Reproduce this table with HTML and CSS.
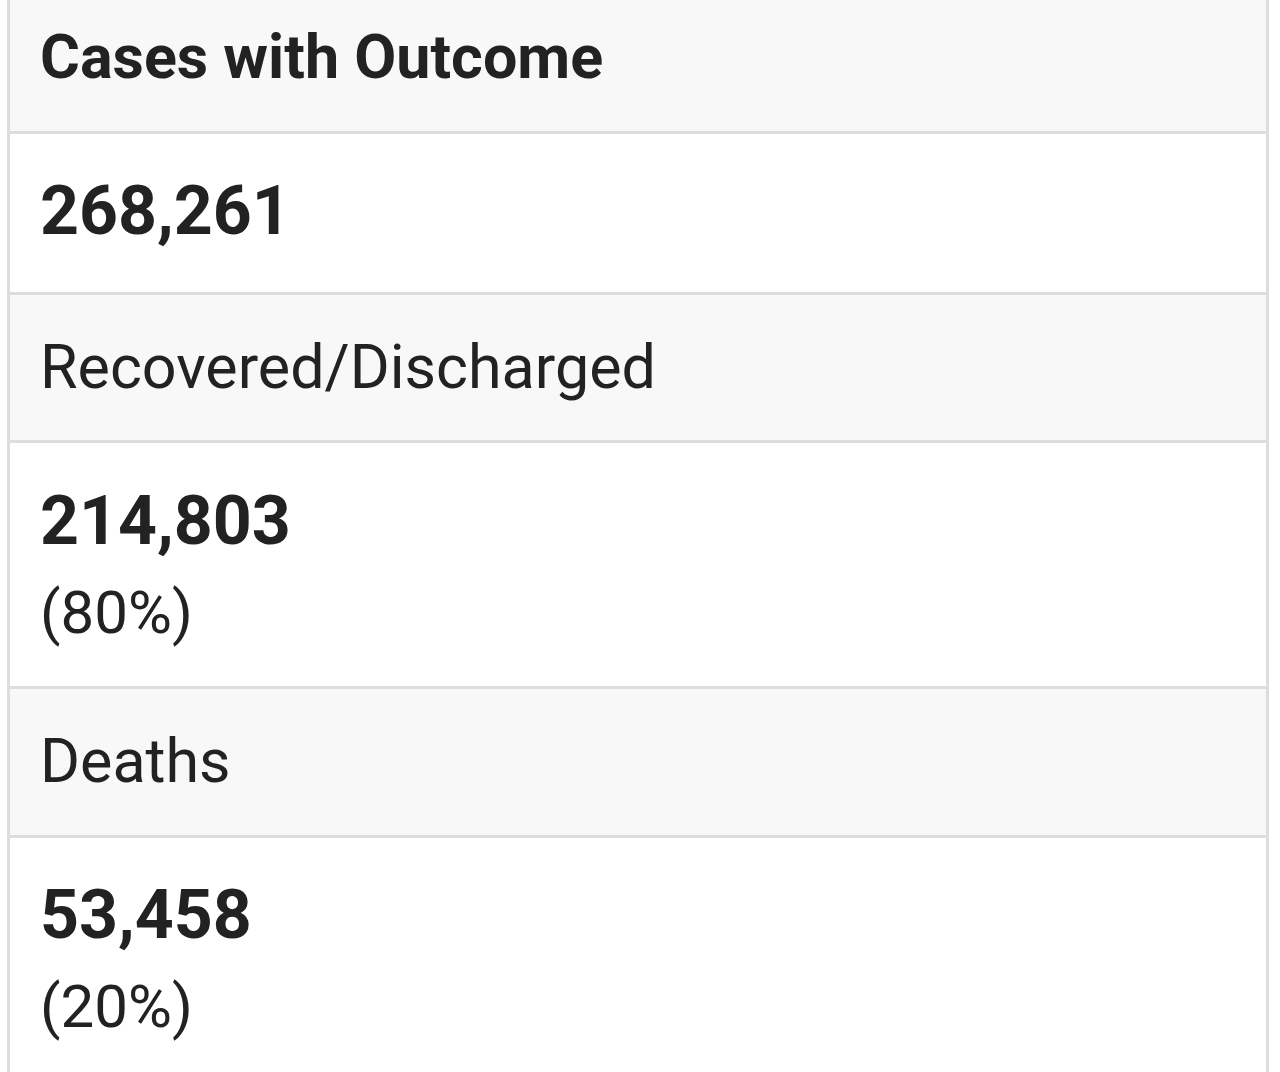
FILE: index.html
```html
<!DOCTYPE html>
<html lang="en">
<head>
<meta charset="utf-8">
<title>Cases with Outcome</title>
<link rel="stylesheet" href="styles.css">
</head>
<body>
<div class="box">
  <div class="cell head title">Cases with Outcome</div>
  <div class="cell single">
    <div class="num">268,261</div>
  </div>
  <div class="cell head label">Recovered/Discharged</div>
  <div class="cell">
    <div class="num">214,803</div>
    <div class="pct">(80%)</div>
  </div>
  <div class="cell head label">Deaths</div>
  <div class="cell last">
    <div class="num">53,458</div>
    <div class="pct">(20%)</div>
  </div>
</div>
</body>
</html>
```
FILE: styles.css
```css
html, body {
  margin: 0;
  padding: 0;
  background: #ffffff;
}
body {
  font-family: Roboto, "Liberation Sans", Arial, sans-serif;
  color: #222222;
  overflow: hidden;
}
.box {
  margin-left: 7px;
  width: 1262px;
  min-height: 100vh;
  box-sizing: border-box;
  border-left: 3px solid #dddddd;
  border-right: 3px solid #dddddd;
  display: flex;
  flex-direction: column;
}
.cell {
  padding: 37px 30px 37px 30px;
  border-bottom: 3px solid #dddddd;
  display: flex;
  flex-direction: column;
  gap: 15px;
}
.cell.single {
  padding-top: 36px;
  padding-bottom: 40px;
}
.cell.last {
  padding-top: 36px;
  padding-bottom: 0;
  border-bottom: none;
  flex: 1;
}
.head {
  background: #f8f8f8;
}
.title {
  font-size: 61px;
  font-weight: 700;
  line-height: 73px;
  padding-top: 21px;
  padding-bottom: 37px;
}
.label {
  font-size: 61px;
  font-weight: 400;
  line-height: 73px;
  padding-top: 36px;
  padding-bottom: 36px;
}
.label + .cell + .label {
  padding-bottom: 37px;
}
.num {
  font-size: 68px;
  font-weight: 700;
  line-height: 82px;
}
.pct {
  font-size: 60px;
  font-weight: 400;
  line-height: 72px;
}
```
